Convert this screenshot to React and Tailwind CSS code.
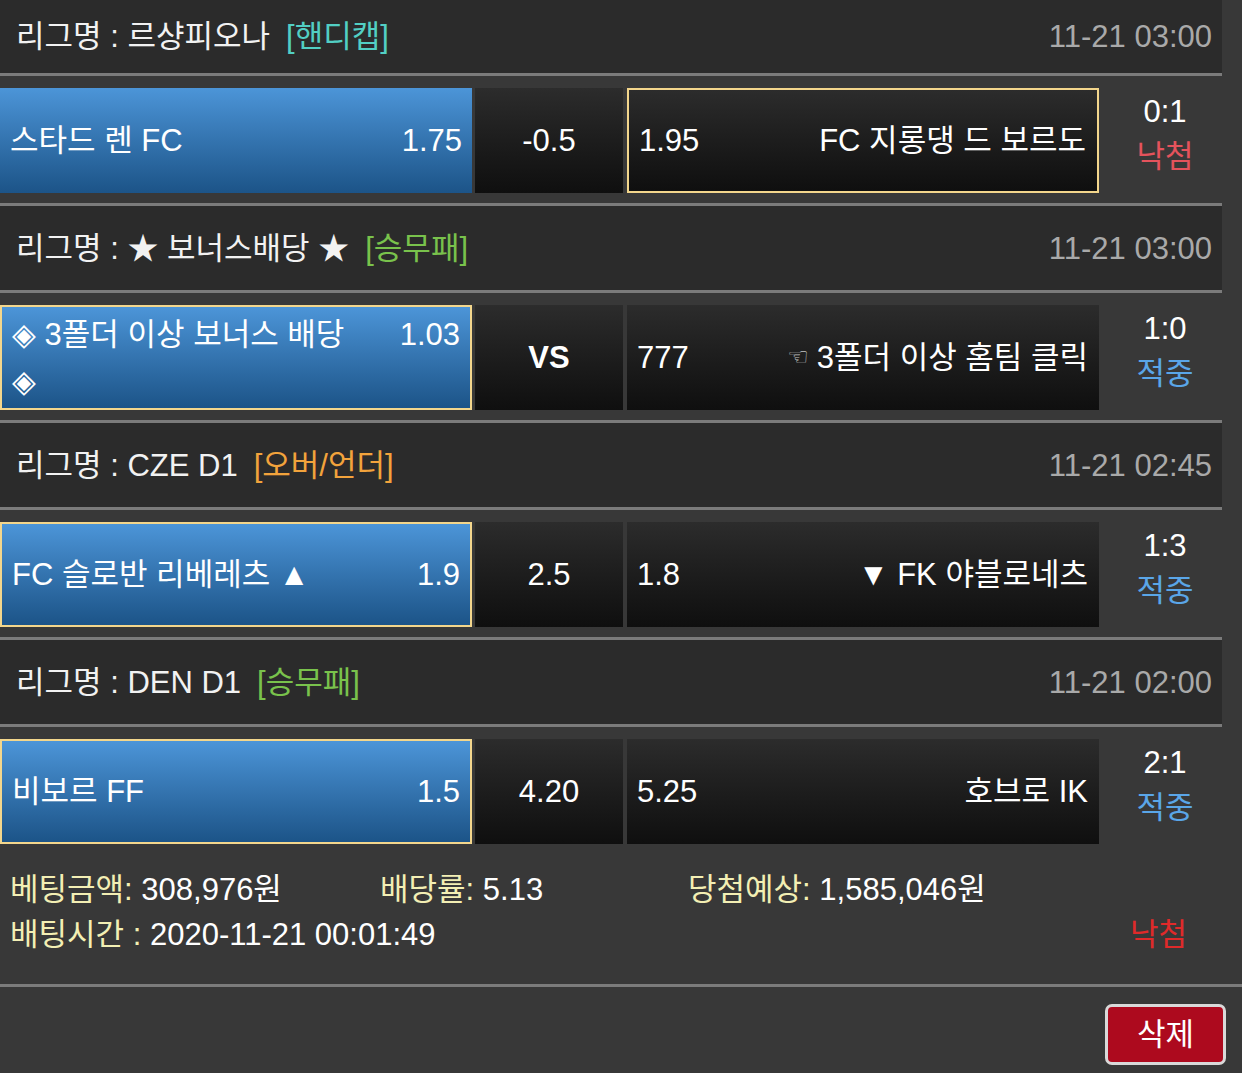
import React from "react";

const games = [
  {
    league: "르샹피오나",
    tag: "[핸디캡]",
    tagColor: "text-[#52cfc4]",
    time: "11-21 03:00",
    home: "스타드 렌 FC",
    homeOdds: "1.75",
    mid: "-0.5",
    awayOdds: "1.95",
    away: "FC 지롱댕 드 보르도",
    pick: "away",
    score: "0:1",
    result: "낙첨",
    first: true,
  },
  {
    league: "★ 보너스배당 ★",
    tag: "[승무패]",
    tagColor: "text-[#79c24c]",
    time: "11-21 03:00",
    home: "◈ 3폴더 이상 보너스 배당 ◈",
    homeOdds: "1.03",
    mid: "VS",
    awayOdds: "777",
    away: "3폴더 이상 홈팀 클릭",
    hand: true,
    pick: "home",
    score: "1:0",
    result: "적중",
  },
  {
    league: "CZE D1",
    tag: "[오버/언더]",
    tagColor: "text-[#f2a33c]",
    time: "11-21 02:45",
    home: "FC 슬로반 리베레츠 ▲",
    homeOdds: "1.9",
    mid: "2.5",
    awayOdds: "1.8",
    away: "▼ FK 야블로네츠",
    pick: "home",
    score: "1:3",
    result: "적중",
  },
  {
    league: "DEN D1",
    tag: "[승무패]",
    tagColor: "text-[#79c24c]",
    time: "11-21 02:00",
    home: "비보르 FF",
    homeOdds: "1.5",
    mid: "4.20",
    awayOdds: "5.25",
    away: "호브로 IK",
    pick: "home",
    score: "2:1",
    result: "적중",
    last: true,
  },
];

function GameBlock({ g }) {
  const homePicked = g.pick === "home";
  const awayPicked = g.pick === "away";
  return (
    <div>
      {/* league header */}
      <div
        className={`flex items-center justify-between bg-[#2b2b2b] pl-4 pr-[10px] ${
          g.first ? "h-[73px]" : "h-[84px]"
        }`}
      >
        <div className="text-[#f2f2f2]">
          리그명 : {g.league}
          <span className={`ml-4 ${g.tagColor}`}>{g.tag}</span>
        </div>
        <div className="text-[#a9a9a9]">{g.time}</div>
      </div>
      <div className="h-[3px] bg-[#7b7b7b]" />

      {/* match row */}
      <div className="flex items-center pt-[12px] pb-[10px]">
        <div
          className={`flex h-[105px] w-[472px] shrink-0 items-center bg-gradient-to-b from-[#4c95d8] to-[#1c5488] pl-[10px] pr-[10px] text-white ${
            homePicked ? "border-2 border-[#f3d68c]" : ""
          }`}
        >
          <div className="flex w-full items-start justify-between">
            <span className="max-w-[350px] leading-[47px]">{g.home}</span>
            <span className="leading-[47px]">{g.homeOdds}</span>
          </div>
        </div>
        <div className="ml-[3px] flex h-[105px] w-[148px] shrink-0 items-center justify-center bg-gradient-to-b from-[#2c2c2c] to-[#0f0f0f] text-white">
          <span className={g.mid === "VS" ? "font-bold" : ""}>{g.mid}</span>
        </div>
        <div
          className={`ml-[4px] flex h-[105px] w-[472px] shrink-0 items-center justify-between bg-gradient-to-b from-[#2c2c2c] to-[#0f0f0f] pl-[10px] pr-[11px] text-white ${
            awayPicked ? "border-2 border-[#f3d68c]" : ""
          }`}
        >
          <span>{g.awayOdds}</span>
          <span className="flex items-center">
            {g.hand && (
              <span className="mr-2 font-['DejaVu_Sans',sans-serif] text-[24px] text-[#c4c4c4]">
                ☜
              </span>
            )}
            {g.away}
          </span>
        </div>
        <div className="mb-[14px] flex w-[122px] shrink-0 flex-col items-center pl-[10px] leading-[45px]">
          <span className="text-white">{g.score}</span>
          <span
            className={
              g.result === "낙첨" ? "text-[#e4535c]" : "text-[#5aa6e8]"
            }
          >
            {g.result}
          </span>
        </div>
      </div>
      {!g.last && <div className="h-[3px] bg-[#7b7b7b]" />}
    </div>
  );
}

export default function App() {
  return (
    <div className="min-h-screen bg-[#383838] font-['Liberation_Sans','Noto_Sans_CJK_KR',sans-serif] text-[31px] leading-[45px]">
      <div className="w-[1222px]">
        {games.map((g, i) => (
          <GameBlock key={i} g={g} />
        ))}
      </div>

      {/* bet summary */}
      <div className="pl-[10px] pt-[13px] pb-[27px]">
        <div className="flex">
          <div className="w-[370px]">
            <span className="text-[#f3efb4]">베팅금액:</span>
            <span className="text-white"> 308,976원</span>
          </div>
          <div className="w-[308px]">
            <span className="text-[#f3efb4]">배당률:</span>
            <span className="text-white"> 5.13</span>
          </div>
          <div>
            <span className="text-[#f3efb4]">당첨예상:</span>
            <span className="text-white"> 1,585,046원</span>
          </div>
        </div>
        <div className="flex justify-between pr-[55px]">
          <div>
            <span className="text-[#f3efb4]">배팅시간 :</span>
            <span className="text-white"> 2020-11-21 00:01:49</span>
          </div>
          <span className="text-[#e02a2a]">낙첨</span>
        </div>
      </div>
      <div className="h-[3px] bg-[#7b7b7b]" />

      <div className="flex justify-end pt-[17px] pr-[16px] pb-[11px]">
        <button className="flex h-[61px] w-[121px] items-center justify-center rounded-[7px] border-[3px] border-[#d9d9d9] bg-[#ad0a1e] text-white">
          삭제
        </button>
      </div>
    </div>
  );
}
